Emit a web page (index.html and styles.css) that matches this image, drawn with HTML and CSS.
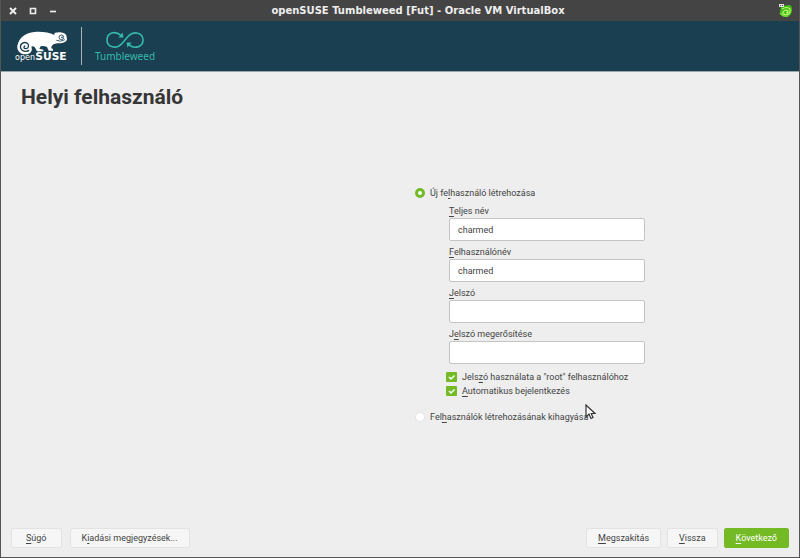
FILE: index.html
```html
<!DOCTYPE html>
<html lang="hu">
<head>
<meta charset="utf-8">
<title>openSUSE Tumbleweed [Fut] - Oracle VM VirtualBox</title>
<link rel="stylesheet" href="styles.css">
</head>
<body>
<div class="window">
  <header class="titlebar">
    <div class="window-controls">
      <button type="button" aria-label="Bezárás"><svg viewBox="0 0 8 8"><path d="M1 1L7 7M7 1L1 7" stroke-width="2"/></svg></button>
      <button type="button" aria-label="Teljes méret"><svg viewBox="0 0 8 8"><path d="M1.500 1.500H6.500V6.500H1.500Z" stroke-width="1.600"/></svg></button>
      <button type="button" aria-label="Kis méret"><svg viewBox="0 0 8 8"><path d="M1 4.500H7" stroke-width="1.700"/></svg></button>
    </div>
    <div class="window-title">openSUSE Tumbleweed [Fut] - Oracle VM VirtualBox</div>
    <svg class="app-icon" viewBox="0 0 14 14" aria-hidden="true">
      <path d="M2 3Q5 1 11 1Q13 2 13 7Q12 13 6 13Q1 12 1 8Z" fill="#3fbf16"/>
      <path d="M3 5Q8 2 11 5Q12 10 7 11Q3 10 4 8Q6 5 9 7Q9 9 7 9" fill="none" stroke="#c8f576" stroke-width="1.200"/>
      <path d="M1 9Q4 13 9 12" fill="none" stroke="#74e02f" stroke-width="1.300"/>
      <path d="M0 0H5V3H0Z" fill="#dedede"/>
      <path d="M1 1.500H2M3 1.500H4" stroke="#555"/>
    </svg>
  </header>

  <div class="brandbar">
    <svg class="suse-logo" viewBox="45 91 162 93" role="img" aria-label="openSUSE">
      <path fill="#fff" d="M52 135C58 110 77 96 103 94C127 92 147 96 163 103Q162 98 165 96C179 92 196 96 199 104L201 116Q200 124 187 127C178 129 169 127 163 130Q153 134 154 143L159 145V150H146L141 139Q132 135 122 137L118 144L130 147V152H111L104 139Q98 135 94 138C99 150 92 160 76 161C60 161 50 148 52 135Z"/>
      <path fill="none" stroke="#1a3f50" stroke-width="4" d="M87 148C82 155 66 153 62 143C58 129 72 122 82 128C89 134 85 145 76 144C70 143 71 136 76 136"/>
      <path fill="none" stroke="#1a3f50" stroke-width="2.500" d="M169 119Q181 125 195 117"/>
      <circle cx="184" cy="110" r="7" fill="#fff" stroke="#1a3f50" stroke-width="2.500"/>
      <circle cx="186" cy="110" r="2.500" fill="#1a3f50"/>
      <text x="45" y="178" class="logo-open">open</text>
      <text x="106" y="178" class="logo-suse">SUSE</text>
    </svg>
    <div class="brand-divider"></div>
    <div class="tumbleweed">
      <svg viewBox="0 0 40 18" aria-hidden="true">
        <path fill="none" stroke="#35b9ab" stroke-width="1.600" d="M16 4.500C10-1 2 2 2 9C2 16 11 19 17 12.500L23 5.500C29-1 38 2 38 9C38 16 29 19 23.500 13"/>
        <path fill="#35b9ab" d="M13.500 6.500L18.500 6.500L17.500 1.500ZM26.500 11.500H21.500L22.500 16.500Z"/>
      </svg>
      <span>Tumbleweed</span>
    </div>
  </div>

  <main>
    <h1>Helyi felhasználó</h1>
    <form id="user-form" class="user-form">
      <label class="choice"><input type="radio" name="mode" checked><span>Új fe<u>l</u>használó létrehozása</span></label>
      <div class="fields">
        <div class="field"><label for="fullname"><u>T</u>eljes név</label><input id="fullname" type="text" value="charmed"></div>
        <div class="field"><label for="username"><u>F</u>elhasználónév</label><input id="username" type="text" value="charmed"></div>
        <div class="field"><label for="password"><u>J</u>elszó</label><input id="password" type="password"></div>
        <div class="field"><label for="confirm">J<u>e</u>lszó megerősítése</label><input id="confirm" type="password"></div>
      </div>
      <div class="options">
        <label class="option"><input type="checkbox" checked><svg viewBox="0 0 11 10" aria-hidden="true"><path d="M3 5L5 7L8.500 3.500"/></svg><span>Jels<u>z</u>ó használata a "root" felhasználóhoz</span></label>
        <label class="option"><input type="checkbox" checked><svg viewBox="0 0 11 10" aria-hidden="true"><path d="M3 5L5 7L8.500 3.500"/></svg><span><u>A</u>utomatikus bejelentkezés</span></label>
      </div>
      <label class="choice"><input type="radio" name="mode"><span>Fel<u>h</u>asználók létrehozásának kihagyása</span></label>
      <svg class="pointer" viewBox="0 0 11 16" aria-hidden="true"><path d="M1 1V13L4 10L6 14.500L8 13.500L6.200 9.500H10Z" fill="#fff" stroke="#333" stroke-width="1.200"/></svg>
    </form>
  </main>

  <footer class="actions">
    <div class="group info">
      <button type="button" class="help"><u>S</u>úgó</button>
      <button type="button">K<u>i</u>adási megjegyzések...</button>
    </div>
    <div class="group">
      <button type="button"><u>M</u>egszakítás</button>
      <button type="button"><u>V</u>issza</button>
      <button type="submit" form="user-form" class="next"><u>K</u>övetkező</button>
    </div>
  </footer>
</div>
</body>
</html>
```

FILE: styles.css
```css
* {
  box-sizing: border-box;
}

body {
  margin: 0;
  font: 9px/14px Roboto, "Liberation Sans", sans-serif;
  color: #434343;
}

button,
input {
  font: inherit;
  color: inherit;
  margin: 0;
}

u {
  text-decoration: underline;
  text-decoration-thickness: 1px;
  text-underline-offset: 2px;
  text-decoration-skip-ink: none;
}

.window {
  display: flex;
  flex-direction: column;
  min-height: 100vh;
  background: #eee;
  border: solid #555;
  border-width: 0 1px 1px;
}

.titlebar {
  display: flex;
  align-items: center;
  height: 21px;
  padding: 0 6px 0 8px;
  background: #444;
  color: #eee;
}

.window-controls {
  display: flex;
  gap: 12px;
}

.window-controls button {
  display: flex;
  padding: 0;
  border: 0;
  background: none;
}

.window-controls svg {
  width: 8px;
  height: 8px;
  fill: none;
  stroke: #eee;
}

.window-title {
  flex: 1;
  text-align: center;
  font: bold 10px/20px "DejaVu Sans", sans-serif;
}

.app-icon {
  width: 14px;
  height: 14px;
}

.brandbar {
  display: flex;
  align-items: center;
  height: 51px;
  padding: 0 14px;
  background: #1a3f50;
  border-bottom: 1px solid #9aa5aa;
}

.suse-logo {
  width: 54px;
  height: 31px;
}

.logo-open {
  font: 24px "DejaVu Sans", sans-serif;
  fill: #fff;
}

.logo-suse {
  font: bold 32px "DejaVu Sans", sans-serif;
  fill: #fff;
}

.brand-divider {
  width: 1px;
  height: 38px;
  margin: 0 13px 0 12px;
  background: #a8b5bb;
}

.tumbleweed {
  display: flex;
  flex-direction: column;
  align-items: center;
  padding-top: 2px;
  font: 10px/14px "Noto Sans", sans-serif;
  color: #35b9ab;
}

.tumbleweed svg {
  width: 40px;
  height: 18px;
}

main {
  flex: 1;
  display: flex;
  flex-direction: column;
  padding: 12px 0 28px;
}

h1 {
  margin: 0 20px;
  font-size: 21px;
  line-height: 26px;
  font-weight: 700;
  color: #363636;
}

.user-form {
  position: relative;
  width: 230px;
  margin: auto 0 auto calc(50% + 15px);
}

.choice,
.option {
  display: flex;
  align-items: center;
}

.choice {
  gap: 5px;
}

.choice input {
  appearance: none;
  width: 10px;
  height: 10px;
  border: 1px solid #e4e4ea;
  border-radius: 50%;
  background: #fff;
}

.choice input:checked {
  border: 3px solid #73ba25;
}

.fields {
  display: grid;
  gap: 4px;
  margin: 4px 0 6px 34px;
}

.field {
  display: flex;
  flex-direction: column;
}

.field input {
  width: 100%;
  height: 23px;
  padding: 0 8px;
  border: 1px solid #c4c4c4;
  border-radius: 2px;
  background: #fff;
}

.options {
  margin: 0 0 12px 31px;
}

.option {
  position: relative;
  gap: 5px;
}

.option input {
  appearance: none;
  width: 11px;
  height: 10px;
  border-radius: 1px;
  background: #fff;
}

.option input:checked {
  background: #73ba25;
}

.option svg {
  position: absolute;
  left: 0;
  width: 11px;
  height: 10px;
  fill: none;
  stroke: #fff;
  stroke-width: 1.5px;
  pointer-events: none;
}

.option input:not(:checked) + svg {
  display: none;
}

.option span,
.choice span {
  white-space: nowrap;
}

.pointer {
  position: absolute;
  right: 49px;
  bottom: 4px;
  width: 11px;
  height: 16px;
}

.actions {
  display: flex;
  justify-content: space-between;
  padding: 0 10px 9px;
}

.group {
  display: flex;
  gap: 6px;
}

.info {
  gap: 8px;
}

.group button {
  height: 20px;
  padding: 0 11px;
  border: 1px solid #e2e2e2;
  border-radius: 2px;
  background: #f6f6f6;
}

.group .help {
  padding: 0 14px;
}

.group .next {
  border-color: #73ba25;
  background: #73ba25;
  color: #fff;
}
```
